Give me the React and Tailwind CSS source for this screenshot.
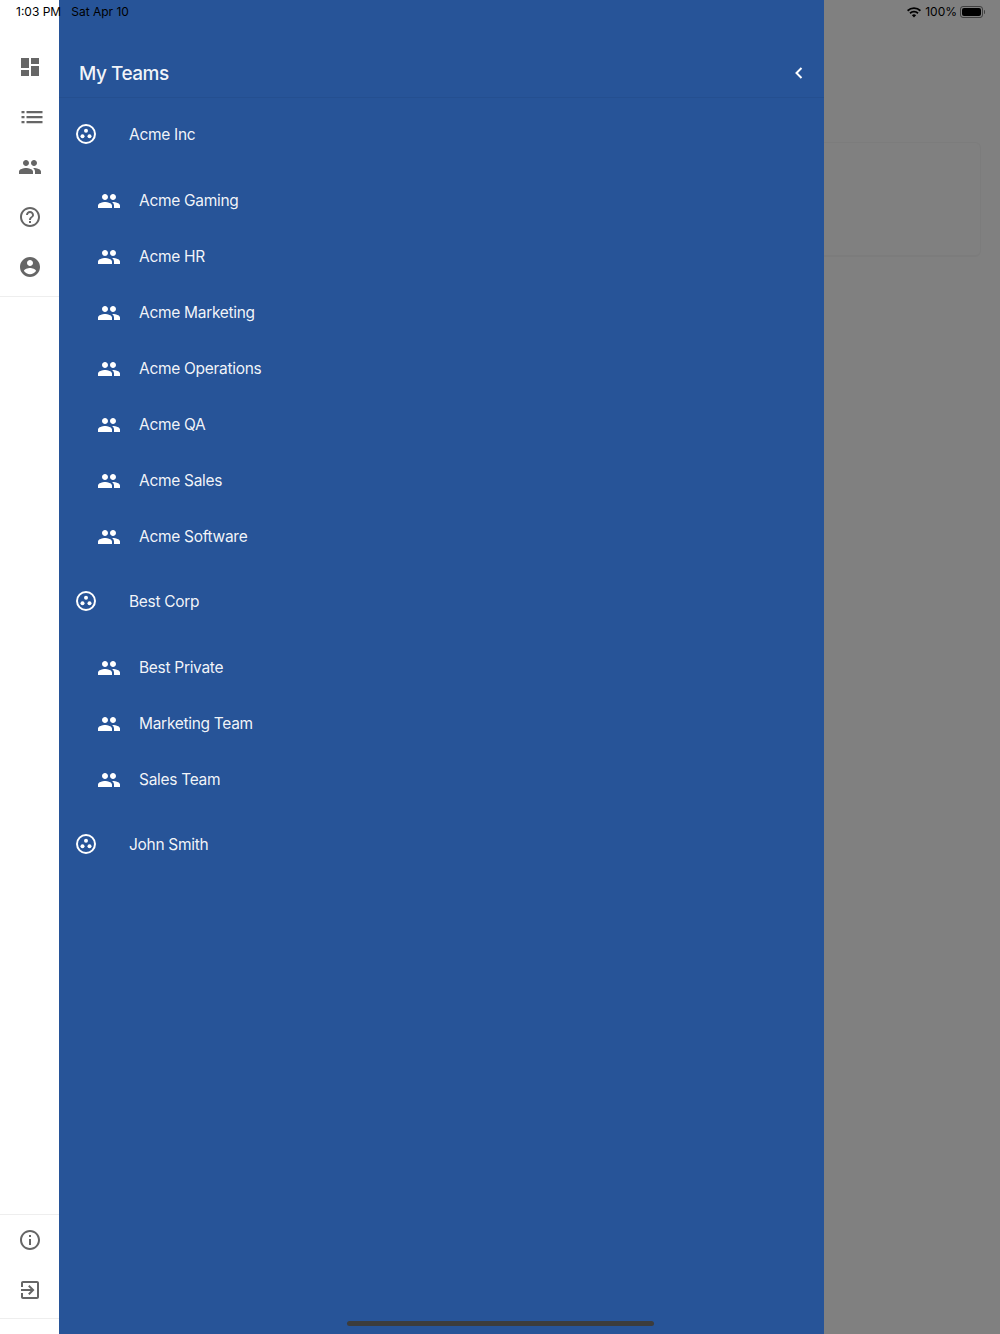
import React from 'react';

const paths = {
    dashboard: 'M3 13h8V3H3v10zm0 8h8v-6H3v6zm10 0h8V11h-8v10zm0-18v6h8V3h-8z',
    people: 'M16 11c1.66 0 2.99-1.34 2.99-3S17.66 5 16 5c-1.66 0-3 1.34-3 3s1.34 3 3 3zm-8 0c1.66 0 2.99-1.34 2.99-3S9.66 5 8 5C6.34 5 5 6.34 5 8s1.34 3 3 3zm0 2c-2.33 0-7 1.17-7 3.5V19h14v-2.5c0-2.33-4.67-3.5-7-3.5zm8 0c-.29 0-.62.02-.97.05 1.16.84 1.97 1.97 1.97 3.45V19h6v-2.5c0-2.33-4.67-3.5-7-3.5z',
    help: 'M11 18h2v-2h-2v2zm1-16C6.48 2 2 6.48 2 12s4.48 10 10 10 10-4.48 10-10S17.52 2 12 2zm0 18c-4.41 0-8-3.59-8-8s3.59-8 8-8 8 3.59 8 8-3.59 8-8 8zm0-14c-2.21 0-4 1.79-4 4h2c0-1.1.9-2 2-2s2 .9 2 2c0 2-3 1.75-3 5h2c0-2.25 3-2.5 3-5 0-2.21-1.79-4-4-4z',
    account: 'M12 2C6.48 2 2 6.48 2 12s4.48 10 10 10 10-4.48 10-10S17.52 2 12 2zm0 3c1.66 0 3 1.34 3 3s-1.34 3-3 3-3-1.34-3-3 1.34-3 3-3zm0 14.2c-2.5 0-4.71-1.28-6-3.22.03-1.99 4-3.08 6-3.08 1.99 0 5.97 1.09 6 3.08-1.29 1.94-3.5 3.22-6 3.22z',
    info: 'M11 7h2v2h-2zm0 4h2v6h-2zm1-9C6.48 2 2 6.48 2 12s4.48 10 10 10 10-4.48 10-10S17.52 2 12 2zm0 18c-4.41 0-8-3.59-8-8s3.59-8 8-8 8 3.59 8 8-3.59 8-8 8z',
    exit: 'M10.09 15.59L11.5 17l5-5-5-5-1.41 1.41L12.67 11H3v2h9.67l-2.58 2.59zM19 3H5c-1.11 0-2 .9-2 2v4h2V5h14v14H5v-4H3v4c0 1.1.89 2 2 2h14c1.1 0 2-.9 2-2V5c0-1.1-.9-2-2-2z',
};

const Icon = ({ name, className = '' }) => (
    <svg viewBox="0 0 24 24" fill="currentColor" className={className}>
        <path d={paths[name]} />
    </svg>
);

// the list icon in the rail is wider than the stock 24px glyph
const ListIcon = () => (
    <svg viewBox="0 0 28 24" fill="currentColor" className="w-7 h-6 text-[#666666]">
        <path d="M5.5 6h3v2.3h-3zm0 5h3v2.3h-3zm0 5h3v2.3h-3zM10.5 6h16v2.3h-16zm0 5h16v2.3h-16zm0 5h16v2.3h-16z" />
    </svg>
);

const OrgIcon = () => (
    <svg viewBox="0 0 24 24" className="w-6 h-6 text-white -mt-[3px]" fill="none">
        <circle cx="12" cy="12" r="9" stroke="currentColor" strokeWidth="2" />
        <circle cx="12" cy="8.8" r="2" fill="currentColor" />
        <circle cx="8.5" cy="14.2" r="2" fill="currentColor" />
        <circle cx="15.5" cy="14.2" r="2" fill="currentColor" />
    </svg>
);

const RailItem = ({ name }) => (
    <div className="h-[50px] flex items-center justify-center">
        <Icon name={name} className="w-6 h-6 text-[#666666]" />
    </div>
);

const Org = ({ name }) => (
    <div className="h-[75px] flex items-center pl-[15px]">
        <OrgIcon />
        <span className="ml-[31px] -mt-[2px] text-[15.5px] tracking-[-0.3px] text-white/95">{name}</span>
    </div>
);

const Team = ({ name }) => (
    <div className="h-14 flex items-center pl-[38px]">
        <Icon name="people" className="w-6 h-6 text-white" />
        <span className="ml-[18px] text-[15.5px] tracking-[-0.3px] text-white/95">{name}</span>
    </div>
);

const StatusBar = () => (
    <div className="absolute top-0 left-0 right-0 h-6 flex items-center justify-between pl-4 pr-[15px] text-xs text-black">
        <div className="flex gap-[10px]">
            <span>1:03 PM</span>
            <span>Sat Apr 10</span>
        </div>
        <div className="flex items-center">
            <svg viewBox="0 0 14 11" className="w-[14px] h-[11px] mr-[4px]">
                <path d="M7 10.5 4.9 8.2a3 3 0 0 1 4.2 0zM3.6 6.9 2.4 5.6a6.6 6.6 0 0 1 9.2 0l-1.2 1.3a4.9 4.9 0 0 0-6.8 0zM1.2 4.4 0 3.1a10 10 0 0 1 14 0l-1.2 1.3a8.3 8.3 0 0 0-11.6 0z" fill="#000" />
            </svg>
            <span>100%</span>
            <div className="ml-[3px] w-[23px] h-[12px] rounded-[3px] border border-black/50 p-px">
                <div className="w-full h-full rounded-[2px] bg-black" />
            </div>
            <div className="w-px h-1 rounded-r-sm bg-black/50 ml-px" />
        </div>
    </div>
);

export default function App() {
    return (
        <div className="relative w-[1000px] h-[1334px] overflow-hidden flex font-['Inter',sans-serif]">
            <div className="w-[59px] shrink-0 bg-white flex flex-col justify-between">
                <div className="pt-[42px] pb-1 border-b border-[#eeeeee]">
                    <RailItem name="dashboard" />
                    <div className="h-[50px] flex items-center justify-center">
                        <ListIcon />
                    </div>
                    <RailItem name="people" />
                    <RailItem name="help" />
                    <RailItem name="account" />
                </div>
                <div className="mb-[15px] border-y border-[#eeeeee] pb-[3px]">
                    <RailItem name="info" />
                    <RailItem name="exit" />
                </div>
            </div>

            <div className="w-[765px] shrink-0 bg-[#275498]">
                <div className="h-[98px] border-b border-[#244f90] flex items-center justify-between pl-5 pr-5 pt-[48px]">
                    <span className="text-[19px] font-medium tracking-[-0.5px] text-white/95 pt-1">My Teams</span>
                    <svg viewBox="0 0 10 14" className="w-[10px] h-[14px]" fill="none">
                        <path d="M7.5 2 2.5 7l5 5" stroke="#fff" strokeWidth="2" />
                    </svg>
                </div>
                <Org name="Acme Inc" />
                {['Acme Gaming', 'Acme HR', 'Acme Marketing', 'Acme Operations', 'Acme QA', 'Acme Sales', 'Acme Software'].map((t) => (
                    <Team key={t} name={t} />
                ))}
                <Org name="Best Corp" />
                {['Best Private', 'Marketing Team', 'Sales Team'].map((t) => (
                    <Team key={t} name={t} />
                ))}
                <Org name="John Smith" />
            </div>

            <div className="flex-1 bg-[#808080] pt-[142px] pr-[19px]">
                <div className="h-[115px] rounded-r-md border border-l-0 border-[#7c7c7c] border-b-2" />
            </div>

            <StatusBar />
            <div className="absolute bottom-[8px] left-[347px] w-[307px] h-[5px] rounded-full bg-[#3c3c3c]" />
        </div>
    );
}
